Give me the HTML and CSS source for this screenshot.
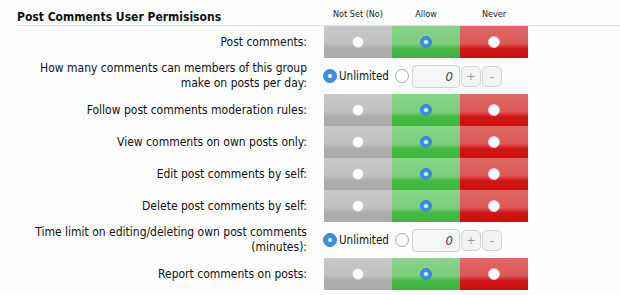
FILE: index.html
```html
<!DOCTYPE html>
<html lang="en">
<head>
    <meta charset="UTF-8">
    <title>Post Comments User Permisisons</title>
    <link rel="stylesheet" href="styles.css">
</head>
<body>

<div class="perms">
    <!-- Header -->
    <div class="perm-head">
        <h3>Post Comments User Permisisons</h3>
        <span class="col-head">Not Set (No)</span>
        <span class="col-head">Allow</span>
        <span class="col-head">Never</span>
    </div>

    <div class="perm-row">
        <div class="label">Post comments:</div>
        <div class="choices">
            <div class="cell unset"><span class="radio"></span></div>
            <div class="cell allow"><span class="radio on"></span></div>
            <div class="cell never"><span class="radio"></span></div>
        </div>
    </div>

    <div class="perm-row tall">
        <div class="label">How many comments can members of this group make on posts per day:</div>
        <div class="limit">
            <span class="radio big on"></span>
            <span class="limit-text">Unlimited</span>
            <span class="radio big"></span>
            <input class="num" type="text" value="0">
            <button class="spin">+</button>
            <button class="spin">-</button>
        </div>
    </div>

    <div class="perm-row">
        <div class="label">Follow post comments moderation rules:</div>
        <div class="choices">
            <div class="cell unset"><span class="radio"></span></div>
            <div class="cell allow"><span class="radio on"></span></div>
            <div class="cell never"><span class="radio"></span></div>
        </div>
    </div>

    <div class="perm-row">
        <div class="label">View comments on own posts only:</div>
        <div class="choices">
            <div class="cell unset"><span class="radio"></span></div>
            <div class="cell allow"><span class="radio on"></span></div>
            <div class="cell never"><span class="radio"></span></div>
        </div>
    </div>

    <div class="perm-row">
        <div class="label">Edit post comments by self:</div>
        <div class="choices">
            <div class="cell unset"><span class="radio"></span></div>
            <div class="cell allow"><span class="radio on"></span></div>
            <div class="cell never"><span class="radio"></span></div>
        </div>
    </div>

    <div class="perm-row">
        <div class="label">Delete post comments by self:</div>
        <div class="choices">
            <div class="cell unset"><span class="radio"></span></div>
            <div class="cell allow"><span class="radio on"></span></div>
            <div class="cell never"><span class="radio"></span></div>
        </div>
    </div>

    <div class="perm-row tall">
        <div class="label">Time limit on editing/deleting own post comments (minutes):</div>
        <div class="limit">
            <span class="radio big on"></span>
            <span class="limit-text">Unlimited</span>
            <span class="radio big"></span>
            <input class="num" type="text" value="0">
            <button class="spin">+</button>
            <button class="spin">-</button>
        </div>
    </div>

    <div class="perm-row">
        <div class="label">Report comments on posts:</div>
        <div class="choices">
            <div class="cell unset"><span class="radio"></span></div>
            <div class="cell allow"><span class="radio on"></span></div>
            <div class="cell never"><span class="radio"></span></div>
        </div>
    </div>
</div>

</body>
</html>
```

FILE: styles.css
```css
* {
    margin: 0;
    padding: 0;
    box-sizing: border-box;
}

body {
    background: #fdfdfe;
    color: #111;
    font-family: 'DejaVu Sans Condensed', 'DejaVu Sans', sans-serif;
    font-stretch: condensed;
    font-size: 12px;
}

.perms {
    padding: 7px 0 0 17px;
}

/* Header */
.perm-head {
    display: grid;
    grid-template-columns: 290px 17px 68px 68px 68px;
    align-items: end;
    height: 19px;
    border-bottom: 1px solid #d6e6ee;
}

.perm-head h3 {
    font-size: 12px;
    font-weight: bold;
    white-space: nowrap;
    padding-bottom: 1px;
    grid-column: 1;
}

.col-head {
    font-size: 9px;
    text-align: center;
    padding-bottom: 6px;
    color: #222;
}

.perm-head .col-head:nth-child(2) {
    grid-column: 3;
}

/* Rows */
.perm-row {
    display: grid;
    grid-template-columns: 290px 204px;
    column-gap: 17px;
    align-items: center;
    height: 32px;
}

.perm-row.tall {
    height: 36px;
}

.label {
    text-align: right;
    line-height: 15px;
}

.choices {
    display: flex;
    height: 32px;
}

.cell {
    width: 68px;
    display: flex;
    align-items: center;
    justify-content: center;
}

.cell.unset {
    background: linear-gradient(#c8c8c8, #c0c0c0 55%, #adadad 72%, #acacac);
}

.cell.allow {
    background: linear-gradient(#88d488, #7ccd7c 55%, #44b844 72%, #3db53d);
}

.cell.never {
    background: linear-gradient(#e26868, #dc5858 55%, #cf1414 72%, #cc1010);
}

/* Radios */
.radio {
    width: 12px;
    height: 12px;
    border-radius: 50%;
    background: #fff;
    border: 1px solid #d0d0d0;
    display: inline-block;
    position: relative;
}

.radio.on {
    background: #3a8ee6;
    border-color: #3585dc;
}

.radio.on::after {
    content: "";
    position: absolute;
    left: 50%;
    top: 50%;
    width: 4px;
    height: 4px;
    margin: -2px 0 0 -2px;
    border-radius: 50%;
    background: #fff;
}

.radio.big {
    width: 14px;
    height: 14px;
    border-color: #a8a8a8;
}

.radio.big.on {
    border-color: #3585dc;
}

/* Limit controls */
.limit {
    display: flex;
    align-items: center;
    margin-left: -1px;
}

.limit-text {
    font-size: 11.5px;
    margin-left: 2px;
    margin-right: 6px;
}

.num {
    width: 48px;
    height: 23px;
    margin-left: 3px;
    border: 1px solid #d2d2d2;
    border-radius: 4px;
    background: #f6f6f6;
    font-family: 'DejaVu Sans Condensed', 'DejaVu Sans', sans-serif;
    font-size: 13px;
    font-style: italic;
    color: #444;
    text-align: right;
    padding-right: 6px;
}

.spin {
    width: 20px;
    height: 21px;
    margin-left: 1px;
    border: 1px solid #d4d4d4;
    border-radius: 5px;
    background: #f3f3f3;
    color: #999;
    font-family: 'DejaVu Sans', sans-serif;
    font-size: 11px;
}
```
